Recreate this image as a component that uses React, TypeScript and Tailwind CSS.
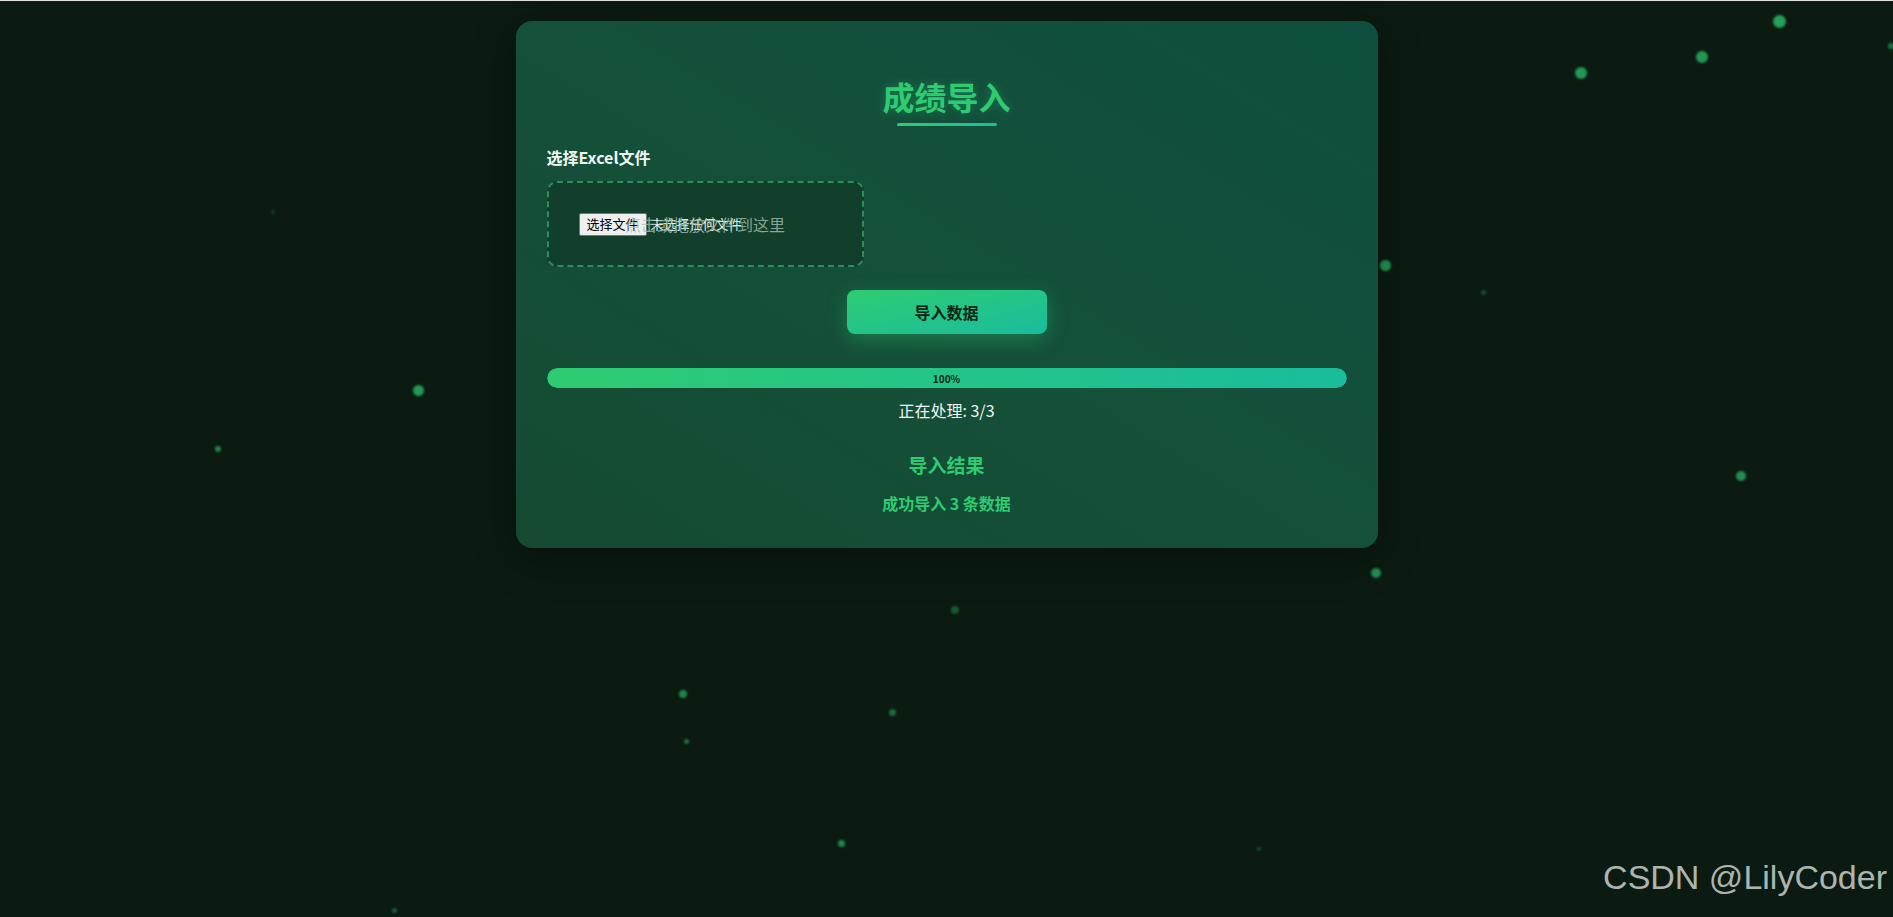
import React from 'react';

type Dot = { x: number; y: number; size: number; opacity: number };

// floating glow particles behind the import card
const dots: Dot[] = [
  { x: 1779, y: 21, size: 13, opacity: 0.75 },
  { x: 1702, y: 57, size: 12, opacity: 0.7 },
  { x: 1581, y: 73, size: 12, opacity: 0.7 },
  { x: 1891, y: 46, size: 6, opacity: 0.5 },
  { x: 1385, y: 265, size: 11, opacity: 0.7 },
  { x: 1483, y: 292, size: 5, opacity: 0.3 },
  { x: 273, y: 212, size: 4, opacity: 0.2 },
  { x: 418, y: 390, size: 11, opacity: 0.7 },
  { x: 218, y: 449, size: 6, opacity: 0.6 },
  { x: 1741, y: 476, size: 10, opacity: 0.65 },
  { x: 1376, y: 573, size: 10, opacity: 0.65 },
  { x: 955, y: 610, size: 8, opacity: 0.35 },
  { x: 683, y: 694, size: 8, opacity: 0.6 },
  { x: 892, y: 712, size: 7, opacity: 0.45 },
  { x: 686, y: 741, size: 5, opacity: 0.5 },
  { x: 841, y: 843, size: 7, opacity: 0.6 },
  { x: 1259, y: 849, size: 4, opacity: 0.3 },
  { x: 394, y: 910, size: 5, opacity: 0.4 },
];

export default function App() {
  const progress = 100;

  return (
    <div className="relative h-[917px] overflow-hidden bg-[#0b1b11] font-['Noto_Sans_CJK_SC','Noto_Sans',sans-serif]">
      <div className="h-px bg-[#e2e2e2]" />

      {dots.map((d, i) => (
        <span
          key={i}
          className="absolute rounded-full bg-[#2ecc71] blur-[1px]"
          style={{
            left: d.x - d.size / 2,
            top: d.y - d.size / 2,
            width: d.size,
            height: d.size,
            opacity: d.opacity,
          }}
        />
      ))}

      <div className="relative mx-auto mt-5 w-[862px] rounded-2xl bg-gradient-to-tr from-[#154a31] via-[#14503a] to-[#0f4f3f] px-[31px] pt-[56px] pb-[33px] shadow-[0_10px_40px_rgba(0,0,0,0.35)]">
        <div className="flex flex-col items-center">
          <h1 className="text-[32px] leading-[38px] font-bold text-[#2ecc71] [text-shadow:0_0_10px_rgba(46,204,113,0.35)]">
            成绩导入
          </h1>
          <div className="mt-[8px] h-[3px] w-[100px] rounded-full bg-gradient-to-r from-[#2ecc71] to-[#1abc9c]" />
        </div>

        <label className="mt-[19px] block text-[16px] leading-6 font-bold text-[#f0f7f2]">
          选择Excel文件
        </label>

        <div className="relative mt-3 w-[317px] rounded-[10px] border-2 border-dashed border-[#2a8f58] bg-[#123f2b] p-[30px]">
          <div className="flex h-[22px] items-center">
            <span className="flex h-[23px] items-center rounded-[2px] border border-[#767676] bg-[#efefef] px-[7px] text-[13px] text-black">
              选择文件
            </span>
            <span className="ml-[4px] text-[13px] text-[#e6efe9]">未选择任何文件</span>
          </div>
          <span className="pointer-events-none absolute inset-0 flex items-center justify-center text-[16px] text-[#a9bfb1]/80">
            点击或拖放文件到这里
          </span>
        </div>

        <div className="mt-[23px] flex justify-center">
          <button className="h-[44px] w-[200px] rounded-lg bg-gradient-to-br from-[#2ecc71] to-[#1abc9c] text-[16px] font-semibold text-[#0c2416] shadow-[0_6px_20px_rgba(46,204,113,0.35)]">
            导入数据
          </button>
        </div>

        <div className="relative mt-[34px] h-5 overflow-hidden rounded-full bg-black/20">
          <div
            className="h-full rounded-full bg-gradient-to-r from-[#2ecc71] to-[#1abc9c]"
            style={{ width: `${progress}%` }}
          />
          <span className="absolute inset-0 flex items-center justify-center text-[10px] font-semibold text-[#0c2416]">
            {progress}%
          </span>
        </div>

        <p className="mt-[10px] text-center text-[16px] leading-6 text-[#f0f7f2]">正在处理: 3/3</p>

        <h3 className="mt-[28px] text-center text-[19px] leading-[29px] font-bold text-[#2ecc71]">导入结果</h3>
        <p className="mt-[12px] text-center text-[16px] leading-6 font-semibold text-[#2ecc71]">
          成功导入 3 条数据
        </p>
      </div>

      <div className="absolute right-[6px] bottom-[14px] font-['Liberation_Sans',Arial,sans-serif] text-[34px] text-[#c4cac6]/90">
        CSDN @LilyCoder
      </div>
    </div>
  );
}
